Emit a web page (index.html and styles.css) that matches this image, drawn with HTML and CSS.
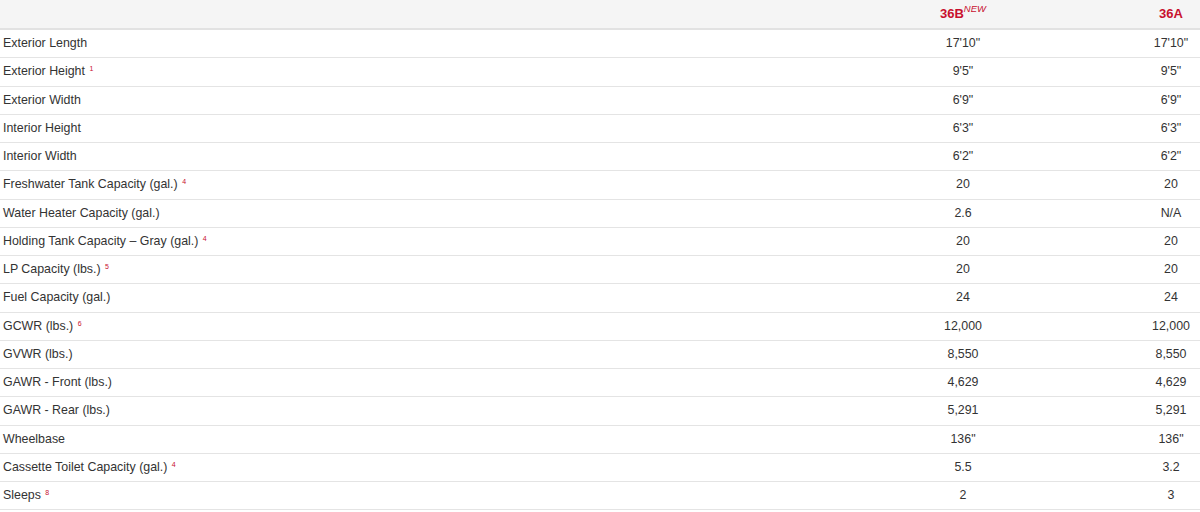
FILE: index.html
```html
<!DOCTYPE html>
<html>
<head>
<meta charset="utf-8">
<link rel="stylesheet" href="styles.css">
</head>
<body>
<table class="specs">
  <colgroup>
    <col class="c-label">
    <col class="c-b">
    <col class="c-a">
  </colgroup>
  <thead>
    <tr>
      <th class="label"></th>
      <th class="model">36B<sup class="new">NEW</sup></th>
      <th class="model">36A</th>
    </tr>
  </thead>
  <tbody>
    <tr><td class="label">Exterior Length</td><td>17'10"</td><td>17'10"</td></tr>
    <tr><td class="label">Exterior Height <sup class="fn">1</sup></td><td>9'5"</td><td>9'5"</td></tr>
    <tr><td class="label">Exterior Width</td><td>6'9"</td><td>6'9"</td></tr>
    <tr><td class="label">Interior Height</td><td>6'3"</td><td>6'3"</td></tr>
    <tr><td class="label">Interior Width</td><td>6'2"</td><td>6'2"</td></tr>
    <tr><td class="label">Freshwater Tank Capacity (gal.) <sup class="fn">4</sup></td><td>20</td><td>20</td></tr>
    <tr><td class="label">Water Heater Capacity (gal.)</td><td>2.6</td><td>N/A</td></tr>
    <tr><td class="label">Holding Tank Capacity – Gray (gal.) <sup class="fn">4</sup></td><td>20</td><td>20</td></tr>
    <tr><td class="label">LP Capacity (lbs.) <sup class="fn">5</sup></td><td>20</td><td>20</td></tr>
    <tr><td class="label">Fuel Capacity (gal.)</td><td>24</td><td>24</td></tr>
    <tr><td class="label">GCWR (lbs.) <sup class="fn">6</sup></td><td>12,000</td><td>12,000</td></tr>
    <tr><td class="label">GVWR (lbs.)</td><td>8,550</td><td>8,550</td></tr>
    <tr><td class="label">GAWR - Front (lbs.)</td><td>4,629</td><td>4,629</td></tr>
    <tr><td class="label">GAWR - Rear (lbs.)</td><td>5,291</td><td>5,291</td></tr>
    <tr><td class="label">Wheelbase</td><td>136"</td><td>136"</td></tr>
    <tr><td class="label">Cassette Toilet Capacity (gal.) <sup class="fn">4</sup></td><td>5.5</td><td>3.2</td></tr>
    <tr><td class="label">Sleeps <sup class="fn">8</sup></td><td>2</td><td>3</td></tr>
  </tbody>
</table>
</body>
</html>
```
FILE: styles.css
```css
html, body {
  margin: 0;
  padding: 0;
  background: #fff;
}
body {
  font-family: "Liberation Sans", Arial, sans-serif;
  font-size: 12.4px;
  color: #333;
}
.specs {
  width: 1200px;
  border-collapse: collapse;
  table-layout: fixed;
}
.c-label { width: 784px; }
.c-b { width: 358px; }
.c-a { width: 58px; }
.specs th,
.specs td {
  padding: 5px 0;
  line-height: 17.25px;
  text-align: center;
  border-bottom: 1px solid #e4e4e4;
  white-space: nowrap;
}
.specs thead th {
  background: #f5f5f5;
  height: 18px;
  border-bottom: 2px solid #e2e2e2;
}
.specs .label {
  text-align: left;
  padding-left: 3px;
}
.model {
  color: #c8102e;
  font-weight: bold;
  font-size: 13px;
}
.new {
  font-style: italic;
  font-weight: normal;
  font-size: 9.5px;
  color: #c8102e;
  vertical-align: top;
  position: relative;
  top: -1px;
  line-height: 1;
}
.fn {
  color: #c8102e;
  font-size: 7px;
  vertical-align: top;
  line-height: 1;
  position: relative;
  top: 2px;
  margin-left: 1px;
}
```
